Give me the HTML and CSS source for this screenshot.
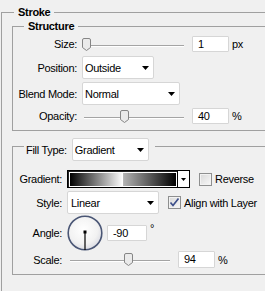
FILE: index.html
```html
<!DOCTYPE html>
<html lang="en">
<head>
    <meta charset="UTF-8">
    <meta name="viewport" content="width=device-width, initial-scale=1.0">
    <title>Layer Style - Stroke</title>
    <link rel="stylesheet" href="styles.css">
</head>
<body>
    <div class="panel">
        <fieldset class="group group-stroke">
            <legend class="group-title">Stroke</legend>

            <fieldset class="group group-structure">
                <legend class="group-title">Structure</legend>

                <div class="row row-size">
                    <span class="label">Size:</span>
                    <div class="slider">
                        <span class="thumb" style="left: 0px">
                            <svg width="9" height="13" viewBox="0 0 9 13"><path d="M2 0.5h5a1.5 1.5 0 0 1 1.5 1.5v7.5l-4 3l-4 -3v-7.5a1.5 1.5 0 0 1 1.5 -1.5z" fill="#eaeaea" stroke="#858585"/></svg>
                        </span>
                    </div>
                    <span class="field">1</span>
                    <span class="unit">px</span>
                </div>

                <div class="row row-position">
                    <span class="label">Position:</span>
                    <div class="select select-position">
                        <span>Outside</span>
                        <svg width="7" height="4" viewBox="0 0 7 4"><polygon points="0,0 7,0 3.5,4" fill="#000"/></svg>
                    </div>
                </div>

                <div class="row row-blend">
                    <span class="label">Blend Mode:</span>
                    <div class="select select-blend">
                        <span>Normal</span>
                        <svg width="7" height="4" viewBox="0 0 7 4"><polygon points="0,0 7,0 3.5,4" fill="#000"/></svg>
                    </div>
                </div>

                <div class="row row-opacity">
                    <span class="label">Opacity:</span>
                    <div class="slider">
                        <span class="thumb" style="left: 38px">
                            <svg width="9" height="13" viewBox="0 0 9 13"><path d="M2 0.5h5a1.5 1.5 0 0 1 1.5 1.5v7.5l-4 3l-4 -3v-7.5a1.5 1.5 0 0 1 1.5 -1.5z" fill="#eaeaea" stroke="#858585"/></svg>
                        </span>
                    </div>
                    <span class="field">40</span>
                    <span class="unit">%</span>
                </div>
            </fieldset>

            <fieldset class="group group-fill">
                <legend class="fill-legend">
                    <div class="fill-legend-inner">
                        <span class="legend-label">Fill Type:</span>
                        <div class="select select-filltype">
                            <span>Gradient</span>
                            <svg width="7" height="4" viewBox="0 0 7 4"><polygon points="0,0 7,0 3.5,4" fill="#000"/></svg>
                        </div>
                    </div>
                </legend>

                <div class="row row-gradient">
                    <span class="label">Gradient:</span>
                    <div class="gradient-picker">
                        <div class="gradient-bar"></div>
                        <div class="gradient-arrow">
                            <svg width="5" height="3" viewBox="0 0 5 3"><polygon points="0,0 5,0 2.5,3" fill="#000"/></svg>
                        </div>
                    </div>
                    <span class="check check-reverse"></span>
                    <span class="check-label">Reverse</span>
                </div>

                <div class="row row-style">
                    <span class="label">Style:</span>
                    <div class="select select-style">
                        <span>Linear</span>
                        <svg width="7" height="4" viewBox="0 0 7 4"><polygon points="0,0 7,0 3.5,4" fill="#000"/></svg>
                    </div>
                    <span class="check check-align">
                        <svg width="11" height="11" viewBox="0 0 11 11"><polyline points="1.5,5.5 4,8.5 9.5,1.5" fill="none" stroke="#3d4f8a" stroke-width="1.7"/></svg>
                    </span>
                    <span class="check-label">Align with Layer</span>
                </div>

                <div class="row row-angle">
                    <span class="label">Angle:</span>
                    <svg class="dial" width="36" height="36" viewBox="0 0 36 36">
                        <defs>
                            <radialGradient id="dialFill" cx="45%" cy="40%" r="60%">
                                <stop offset="0" stop-color="#ffffff"/>
                                <stop offset="0.7" stop-color="#f2f2f2"/>
                                <stop offset="1" stop-color="#dcdde4"/>
                            </radialGradient>
                        </defs>
                        <circle cx="18" cy="18" r="16.8" fill="url(#dialFill)" stroke="#4a5675" stroke-width="1.6"/>
                        <line x1="18" y1="17" x2="18" y2="35" stroke="#000" stroke-width="1.2"/>
                        <rect x="16.5" y="15.5" width="3" height="3" fill="#000"/>
                    </svg>
                    <span class="field field-angle">-90</span>
                    <span class="unit unit-degree">°</span>
                </div>

                <div class="row row-scale">
                    <span class="label">Scale:</span>
                    <div class="slider">
                        <span class="thumb" style="left: 56px">
                            <svg width="9" height="13" viewBox="0 0 9 13"><path d="M2 0.5h5a1.5 1.5 0 0 1 1.5 1.5v7.5l-4 3l-4 -3v-7.5a1.5 1.5 0 0 1 1.5 -1.5z" fill="#eaeaea" stroke="#858585"/></svg>
                        </span>
                    </div>
                    <span class="field field-scale">94</span>
                    <span class="unit">%</span>
                </div>
            </fieldset>
        </fieldset>
    </div>
</body>
</html>
```

FILE: styles.css
```css
* {
    box-sizing: border-box;
}

body {
    margin: 0;
    background-color: #f0f0f0;
    font-family: 'Liberation Sans', Arial, sans-serif;
    font-size: 11px;
    letter-spacing: -0.3px;
    color: #000;
    overflow: hidden;
}

/* group boxes (right edge is cut off by the window) */
.group {
    margin: 0;
    padding: 0;
    min-width: 0;
    border: 1px solid #a0a0a0;
    border-right: none;
}

.group-title {
    padding: 0 4px;
    line-height: 13px;
    font-weight: bold;
}

.group-stroke {
    margin: 6px 0 0 1px;
    padding: 0 0 20px 10px;
}

.group-stroke > .group-title {
    margin-left: 2px;
}

.group-structure {
    margin-top: 1px;
    padding: 0 0 6px 0;
}

.group-structure > .group-title {
    margin-left: 11px;
}

.group-fill {
    margin-top: 7px;
    padding: 0 0 6px 0;
}

.fill-legend {
    margin-left: 11px;
    padding: 0 6px 0 2px;
    height: 17px;
}

.fill-legend-inner {
    display: flex;
    align-items: center;
    height: 23px;
}

.legend-label {
    margin-right: 5px;
}

/* rows */
.row {
    display: flex;
    align-items: center;
}

.label {
    flex-shrink: 0;
    text-align: right;
    margin-right: 5px;
}

.group-structure .label {
    width: 64px;
}

.group-fill .label {
    width: 49px;
}

.row-size {
    margin-top: 3px;
    height: 16px;
}

.row-position {
    margin-top: 4px;
    height: 23px;
}

.row-blend {
    margin-top: 3px;
    height: 23px;
}

.row-opacity {
    margin-top: 3px;
    height: 16px;
}

.row-gradient {
    margin-top: 15px;
    height: 18px;
}

.row-style {
    margin-top: 3px;
    height: 23px;
}

.row-angle {
    margin-top: 1px;
    height: 36px;
}

.row-scale {
    height: 17px;
}

/* controls */
.select {
    display: flex;
    align-items: center;
    justify-content: space-between;
    height: 23px;
    padding: 0 4px 0 2px;
    background: #fff;
    border: 1px solid #d6d6d6;
    border-radius: 2px;
    flex-shrink: 0;
}

.select-position {
    width: 72px;
}

.select-blend {
    width: 98px;
}

.select-filltype {
    width: 77px;
}

.select-style {
    width: 92px;
    padding-left: 3px;
}

.field {
    width: 37px;
    height: 16px;
    line-height: 14px;
    padding-left: 5px;
    background: #fff;
    border: 1px solid #d6d6d6;
    border-radius: 1px;
    flex-shrink: 0;
}

.slider + .field {
    margin-left: 8px;
}

.field-angle {
    width: 40px;
    margin-left: 4px;
}

.field-scale {
    height: 17px;
    line-height: 15px;
}

.unit {
    margin-left: 3px;
}

.unit-degree {
    align-self: flex-start;
    margin-top: 7px;
}

.slider {
    position: relative;
    width: 102px;
    height: 13px;
    flex-shrink: 0;
}

.row-scale .slider {
    margin-left: 1px;
}

.slider::before {
    content: '';
    position: absolute;
    left: 2px;
    right: 0;
    top: 7px;
    border-top: 1px solid #a4a4a4;
    border-bottom: 1px solid #fff;
}

.thumb {
    position: absolute;
    top: 0;
    display: block;
    width: 9px;
    height: 13px;
}

.thumb svg {
    display: block;
}

.gradient-picker {
    display: flex;
    width: 123px;
    height: 18px;
    border: 1px solid #000;
    box-shadow: inset 1px 1px 0 #222;
    flex-shrink: 0;
}

.gradient-bar {
    flex: 1;
    margin: 1px 0 0 1px;
    border: 1px solid #fff;
    background: linear-gradient(to right, #000 0%, #fff 50%, #b2b2b2 50.5%, #000 100%);
}

.gradient-arrow {
    display: flex;
    align-items: center;
    justify-content: center;
    width: 12px;
    background: #fff;
    border-left: 1px solid #000;
}

.check {
    display: flex;
    align-items: center;
    justify-content: center;
    width: 13px;
    height: 13px;
    border: 1px solid #8e8f8f;
    background: linear-gradient(135deg, #d8d8d8, #f8f8f8);
    box-shadow: inset 0 0 0 1px #f2f2f2;
    flex-shrink: 0;
}

.check-reverse {
    margin-left: 9px;
}

.check-align {
    margin-left: 9px;
}

.check-label {
    margin-left: 3px;
}

.dial {
    display: block;
    flex-shrink: 0;
}
```
